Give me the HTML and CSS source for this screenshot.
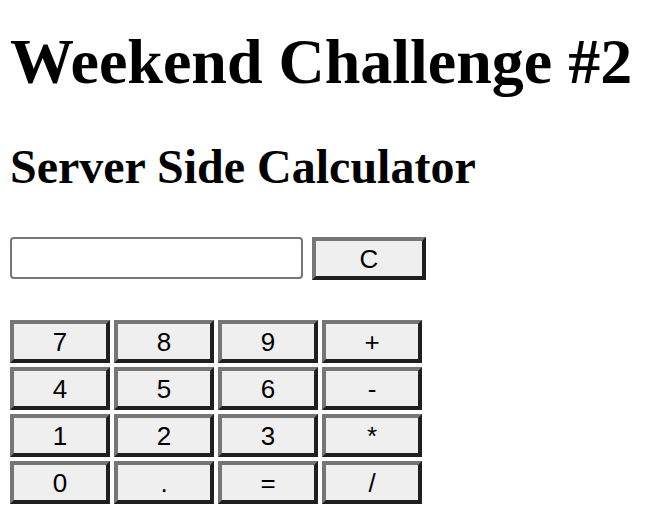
FILE: index.html
```html
<!DOCTYPE html>
<html>
<head>
<meta charset="utf-8">
<title>Server Side Calculator</title>
<link rel="stylesheet" href="styles.css">
</head>
<body>
<main class="page">
  <h1 class="title">Weekend Challenge #2</h1>
  <h2 class="subtitle">Server Side Calculator</h2>
  <div class="entry">
    <input class="display" type="text">
    <button class="btn clear">C</button>
  </div>
  <div class="keypad">
    <button class="btn key">7</button>
    <button class="btn key">8</button>
    <button class="btn key">9</button>
    <button class="btn key">+</button>
    <button class="btn key">4</button>
    <button class="btn key">5</button>
    <button class="btn key">6</button>
    <button class="btn key">-</button>
    <button class="btn key">1</button>
    <button class="btn key">2</button>
    <button class="btn key">3</button>
    <button class="btn key">*</button>
    <button class="btn key">0</button>
    <button class="btn key">.</button>
    <button class="btn key">=</button>
    <button class="btn key">/</button>
  </div>
</main>
</body>
</html>
```
FILE: styles.css
```css
html, body {
  margin: 0;
  padding: 0;
  background: #ffffff;
}

.page {
  padding: 0 10px;
  font-family: "Liberation Serif", "Times New Roman", serif;
  color: #000;
}

.title {
  font-size: 64px;
  font-weight: bold;
  line-height: 71px;
  margin: 26px 0 0;
}

.subtitle {
  font-size: 48px;
  font-weight: bold;
  line-height: 53px;
  margin: 43px 0 0;
}

.entry {
  display: flex;
  align-items: flex-start;
  margin-top: 44px;
}

.display {
  box-sizing: border-box;
  width: 293px;
  height: 42px;
  border: 2px solid #767676;
  border-radius: 4px;
  padding: 0 6px;
  margin: 0;
  font-family: "Liberation Sans", Arial, sans-serif;
  font-size: 26px;
  background: #fff;
}

.btn {
  box-sizing: border-box;
  margin: 0;
  padding: 0;
  background: #efefef;
  border-style: solid;
  border-width: 4px;
  border-color: #767676 #1f1f1f #1f1f1f #767676;
  font-family: "Liberation Sans", Arial, sans-serif;
  font-size: 26px;
  color: #000;
  text-align: center;
  line-height: 1;
}

.clear {
  width: 114px;
  height: 43px;
  margin-left: 9px;
}

.keypad {
  display: grid;
  grid-template-columns: repeat(4, 100px);
  grid-auto-rows: 43px;
  gap: 4px;
  margin-top: 40px;
}

.key {
  width: 100px;
  height: 43px;
}
```
